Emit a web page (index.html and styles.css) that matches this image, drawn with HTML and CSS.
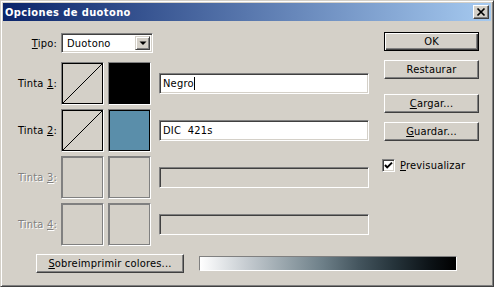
FILE: index.html
```html
<!DOCTYPE html>
<html lang="es">
<head>
  <meta charset="UTF-8">
  <title>Opciones de duotono</title>
  <link rel="stylesheet" href="styles.css">
</head>
<body>
  <div class="window">
    <div class="titlebar">
      <span class="title">Opciones de duotono</span>
      <span class="close">
        <svg width="14" height="12" viewBox="0 0 14 12"><path d="M3.5 2.5 L10.5 9.5 M10.5 2.5 L3.5 9.5" stroke="#000" stroke-width="1.7" fill="none"/></svg>
      </span>
    </div>

    <div class="content">
      <div class="top">
        <div class="main">
          <div class="row tipo-row">
            <span class="label"><u>T</u>ipo:</span>
            <div class="select">
              <span class="select-value">Duotono</span>
              <span class="select-btn">
                <svg width="12" height="12" viewBox="0 0 12 12"><polygon points="2.5,4.5 9.5,4.5 6,8" fill="#000"/></svg>
              </span>
            </div>
          </div>

          <div class="row ink first">
            <span class="label">Tinta <u>1</u>:</span>
            <div class="swatch curve">
              <svg width="39" height="39" viewBox="0 0 39 39"><line x1="0" y1="39" x2="39" y2="0" stroke="#000" stroke-width="1"/></svg>
            </div>
            <div class="swatch ink-black"></div>
            <div class="field"><span>Negro</span><span class="caret"></span></div>
          </div>

          <div class="row ink">
            <span class="label">Tinta <u>2</u>:</span>
            <div class="swatch curve">
              <svg width="39" height="39" viewBox="0 0 39 39"><line x1="0" y1="39" x2="39" y2="0" stroke="#000" stroke-width="1"/></svg>
            </div>
            <div class="swatch ink-blue"></div>
            <div class="field"><span class="pre">DIC  421s</span></div>
          </div>

          <div class="row ink disabled">
            <span class="label">Tinta <u>3</u>:</span>
            <div class="swatch"></div>
            <div class="swatch"></div>
            <div class="field"></div>
          </div>

          <div class="row ink disabled">
            <span class="label">Tinta <u>4</u>:</span>
            <div class="swatch"></div>
            <div class="swatch"></div>
            <div class="field"></div>
          </div>
        </div>

        <div class="side">
          <div class="btn default">OK</div>
          <div class="btn">Restaurar</div>
          <div class="btn gap"><u>C</u>argar...</div>
          <div class="btn"><u>G</u>uardar...</div>
          <div class="check-row">
            <span class="checkbox">
              <svg width="9" height="9" viewBox="0 0 9 9"><polyline points="1,4 3.2,6.4 8,1.6" stroke="#000" stroke-width="2" fill="none"/></svg>
            </span>
            <span><u>P</u>revisualizar</span>
          </div>
        </div>
      </div>

      <div class="bottom">
        <div class="btn wide"><u>S</u>obreimprimir colores...</div>
        <div class="ramp"></div>
      </div>
    </div>
  </div>
</body>
</html>
```

FILE: styles.css
```css
body {
  margin: 0;
  font-family: "DejaVu Sans Condensed", "DejaVu Sans", sans-serif;
  font-size: 11px;
  letter-spacing: 0.2px;
  color: #000;
}
u {
  text-decoration: underline;
  text-underline-offset: 1px;
}
.window {
  width: 494px;
  height: 287px;
  box-sizing: border-box;
  padding: 2px;
  background-color: #d4d0c8;
  border: 1px solid;
  border-color: #d4d0c8 #404040 #404040 #d4d0c8;
  box-shadow: inset 1px 1px 0 #fff, inset -1px -1px 0 #808080;
}
.titlebar {
  height: 18px;
  display: flex;
  align-items: center;
  justify-content: space-between;
  padding-left: 2px;
  background: linear-gradient(to right, #0a246a, #a6caf0);
}
.title {
  color: #fff;
  font-weight: bold;
  letter-spacing: 0.4px;
}
.close {
  width: 16px;
  height: 14px;
  box-sizing: border-box;
  margin-right: 2px;
  display: flex;
  align-items: center;
  justify-content: center;
  background-color: #d4d0c8;
  border: 1px solid;
  border-color: #fff #404040 #404040 #fff;
  box-shadow: inset -1px -1px 0 #808080;
}
.content {
  padding-left: 5px;
}
.top {
  display: flex;
}
.main {
  display: flex;
  flex-direction: column;
}
.row {
  display: flex;
  align-items: center;
}
.label {
  width: 49px;
  margin-right: 4px;
  text-align: right;
  white-space: nowrap;
}
.tipo-row {
  margin-top: 12px;
  height: 20px;
}
.select {
  width: 92px;
  height: 20px;
  box-sizing: border-box;
  display: flex;
  align-items: center;
  background-color: #fff;
  border: 1px solid;
  border-color: #808080 #fff #fff #808080;
  box-shadow: inset 1px 1px 0 #404040, inset -1px -1px 0 #d4d0c8;
  padding: 2px 2px 2px 5px;
}
.select-value {
  flex: 1;
}
.select-btn {
  width: 15px;
  height: 14px;
  box-sizing: border-box;
  display: flex;
  align-items: center;
  justify-content: center;
  background-color: #d4d0c8;
  border: 1px solid;
  border-color: #d4d0c8 #404040 #404040 #d4d0c8;
  box-shadow: inset 1px 1px 0 #fff, inset -1px -1px 0 #808080;
}
.ink {
  height: 43px;
  margin-top: 4px;
}
.ink.first {
  margin-top: 9px;
}
.swatch {
  width: 43px;
  height: 43px;
  box-sizing: border-box;
  margin-right: 4px;
  border: 1px solid;
  border-color: #808080 #fff #fff #808080;
  box-shadow: inset 0 0 0 1px #000;
  background-color: #d4d0c8;
  padding: 1px;
}
.swatch svg {
  display: block;
}
.ink-black {
  background-color: #000;
}
.ink-blue {
  background-color: #5a8eaa;
}
.field {
  width: 210px;
  height: 21px;
  box-sizing: border-box;
  margin-left: 4px;
  display: flex;
  align-items: center;
  padding-left: 3px;
  background-color: #fff;
  border: 1px solid;
  border-color: #808080 #fff #fff #808080;
  box-shadow: inset 1px 1px 0 #404040, inset -1px -1px 0 #d4d0c8;
}
.pre {
  white-space: pre;
}
.caret {
  width: 1px;
  height: 13px;
  background-color: #000;
}
.disabled .label {
  color: #808080;
  text-shadow: 1px 1px 0 #fff;
}
.disabled .swatch {
  box-shadow: inset 1px 1px 0 #808080, inset 0 0 0 1px #808080;
}
.disabled .field {
  background-color: #d4d0c8;
}
.side {
  display: flex;
  flex-direction: column;
  margin-left: 15px;
  padding-top: 11px;
}
.btn {
  width: 95px;
  height: 19px;
  box-sizing: border-box;
  display: flex;
  align-items: center;
  justify-content: center;
  background-color: #d4d0c8;
  border: 1px solid;
  border-color: #fff #404040 #404040 #fff;
  box-shadow: inset -1px -1px 0 #808080;
  margin-bottom: 9px;
  white-space: nowrap;
}
.btn.default {
  border-color: #000;
  box-shadow: inset 1px 1px 0 #fff, inset -1px -1px 0 #404040, inset -2px -2px 0 #808080;
}
.btn.gap {
  margin-top: 6px;
}
.check-row {
  display: flex;
  align-items: center;
  margin-top: 9px;
  margin-left: -2px;
}
.checkbox {
  width: 13px;
  height: 13px;
  box-sizing: border-box;
  margin-right: 5px;
  display: flex;
  align-items: center;
  justify-content: center;
  background-color: #fff;
  border: 1px solid;
  border-color: #808080 #fff #fff #808080;
  box-shadow: inset 1px 1px 0 #404040, inset -1px -1px 0 #d4d0c8;
}
.bottom {
  display: flex;
  align-items: center;
  margin-top: 8px;
  padding-left: 28px;
}
.btn.wide {
  width: 148px;
  margin-bottom: 0;
}
.ramp {
  width: 258px;
  height: 15px;
  box-sizing: border-box;
  margin-left: 15px;
  border: 1px solid;
  border-color: #808080 #fff #fff #808080;
  background: linear-gradient(to right, #fff 0%, #c6ccd1 18%, #96a3aa 34%, #6d7f88 48%, #44555e 62%, #25333a 76%, #0c1216 90%, #000 100%);
}
```
